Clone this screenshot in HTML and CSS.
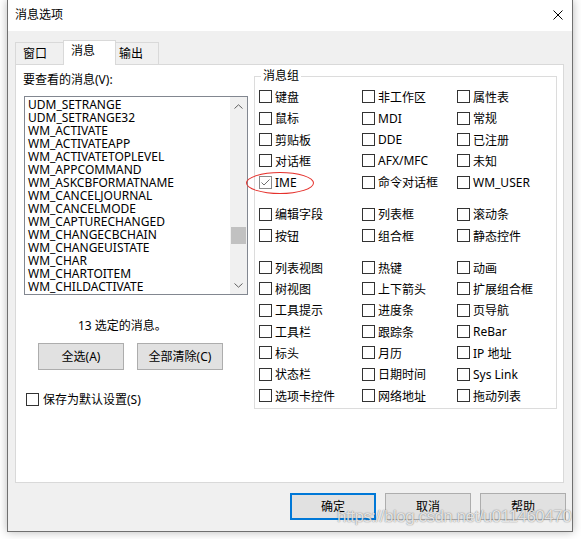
FILE: index.html
```html
<!DOCTYPE html>
<html lang="zh-CN">
<head>
<meta charset="utf-8">
<title>消息选项</title>
<link rel="stylesheet" href="styles.css">
</head>
<body>
<div class="window">
  <div class="titlebar">
    <span class="title">消息选项</span>
    <svg class="close" width="10" height="10" viewBox="0 0 10 10"><path d="M0.5 0.5 L9.5 9.5 M9.5 0.5 L0.5 9.5" stroke="#000" stroke-width="1" fill="none"/></svg>
  </div>
  <div class="client">
    <div class="tabs">
      <div class="tab tab-window">窗口</div>
      <div class="tab tab-active">消息</div>
      <div class="tab tab-output">输出</div>
    </div>
    <div class="panel">
      <div class="left">
        <div class="msg-label">要查看的消息(V):</div>
        <div class="listbox">
          <ul class="items">
            <li>UDM_SETRANGE</li>
            <li>UDM_SETRANGE32</li>
            <li>WM_ACTIVATE</li>
            <li>WM_ACTIVATEAPP</li>
            <li>WM_ACTIVATETOPLEVEL</li>
            <li>WM_APPCOMMAND</li>
            <li>WM_ASKCBFORMATNAME</li>
            <li>WM_CANCELJOURNAL</li>
            <li>WM_CANCELMODE</li>
            <li>WM_CAPTURECHANGED</li>
            <li>WM_CHANGECBCHAIN</li>
            <li>WM_CHANGEUISTATE</li>
            <li>WM_CHAR</li>
            <li>WM_CHARTOITEM</li>
            <li>WM_CHILDACTIVATE</li>
          </ul>
          <div class="vscroll">
            <div class="sb-btn sb-up"><svg width="9" height="5" viewBox="0 0 9 5"><path d="M0.5 4.5 L4.5 0.8 L8.5 4.5" stroke="#606060" stroke-width="1" fill="none"/></svg></div>
            <div class="sb-track"><div class="sb-thumb"></div></div>
            <div class="sb-btn sb-down"><svg width="9" height="5" viewBox="0 0 9 5"><path d="M0.5 0.5 L4.5 4.2 L8.5 0.5" stroke="#606060" stroke-width="1" fill="none"/></svg></div>
          </div>
        </div>
        <div class="count">13 选定的消息。</div>
        <div class="btnrow">
          <button class="btn">全选(A)</button>
          <button class="btn">全部清除(C)</button>
        </div>
        <div class="cb save"><span class="box"></span>保存为默认设置(S)</div>
      </div>
      <div class="group">
        <span class="legend">消息组</span>
        <div class="cb-group">
          <div class="cb"><span class="box"></span>键盘</div>
          <div class="cb"><span class="box"></span>非工作区</div>
          <div class="cb"><span class="box"></span>属性表</div>
          <div class="cb"><span class="box"></span>鼠标</div>
          <div class="cb"><span class="box"></span>MDI</div>
          <div class="cb"><span class="box"></span>常规</div>
          <div class="cb"><span class="box"></span>剪贴板</div>
          <div class="cb"><span class="box"></span>DDE</div>
          <div class="cb"><span class="box"></span>已注册</div>
          <div class="cb"><span class="box"></span>对话框</div>
          <div class="cb"><span class="box"></span>AFX/MFC</div>
          <div class="cb"><span class="box"></span>未知</div>
          <div class="cb checked ime"><span class="box"><svg width="11" height="11" viewBox="0 0 11 11"><path d="M1.5 5.5 L4 8 L9.5 2.5" stroke="#6f6f6f" stroke-width="1" fill="none"/></svg></span>IME<span class="ring"></span></div>
          <div class="cb"><span class="box"></span>命令对话框</div>
          <div class="cb"><span class="box"></span>WM_USER</div>
        </div>
        <div class="cb-group">
          <div class="cb"><span class="box"></span>编辑字段</div>
          <div class="cb"><span class="box"></span>列表框</div>
          <div class="cb"><span class="box"></span>滚动条</div>
          <div class="cb"><span class="box"></span>按钮</div>
          <div class="cb"><span class="box"></span>组合框</div>
          <div class="cb"><span class="box"></span>静态控件</div>
        </div>
        <div class="cb-group">
          <div class="cb"><span class="box"></span>列表视图</div>
          <div class="cb"><span class="box"></span>热键</div>
          <div class="cb"><span class="box"></span>动画</div>
          <div class="cb"><span class="box"></span>树视图</div>
          <div class="cb"><span class="box"></span>上下箭头</div>
          <div class="cb"><span class="box"></span>扩展组合框</div>
          <div class="cb"><span class="box"></span>工具提示</div>
          <div class="cb"><span class="box"></span>进度条</div>
          <div class="cb"><span class="box"></span>页导航</div>
          <div class="cb"><span class="box"></span>工具栏</div>
          <div class="cb"><span class="box"></span>跟踪条</div>
          <div class="cb"><span class="box"></span>ReBar</div>
          <div class="cb"><span class="box"></span>标头</div>
          <div class="cb"><span class="box"></span>月历</div>
          <div class="cb"><span class="box"></span>IP 地址</div>
          <div class="cb"><span class="box"></span>状态栏</div>
          <div class="cb"><span class="box"></span>日期时间</div>
          <div class="cb"><span class="box"></span>Sys Link</div>
          <div class="cb"><span class="box"></span>选项卡控件</div>
          <div class="cb"><span class="box"></span>网络地址</div>
          <div class="cb"><span class="box"></span>拖动列表</div>
        </div>
      </div>
    </div>
    <div class="footer">
      <button class="btn btn-default">确定</button>
      <button class="btn">取消</button>
      <button class="btn">帮助</button>
    </div>
  </div>
  <div class="watermark">https://blog.csdn.net/u011460470</div>
</div>
</body>
</html>
```
FILE: styles.css
```css
* { box-sizing: border-box; }
html, body { margin: 0; padding: 0; }
body {
  width: 581px;
  height: 539px;
  overflow: hidden;
  background: #ffffff;
  font-family: "Noto Sans", "Noto Sans CJK SC", sans-serif;
  font-size: 12px;
  color: #000;
}
.window {
  position: relative;
  margin-left: 7px;
  width: 566px;
  height: 532px;
  border: 1px solid #707070;
  border-top: none;
  background: #f0f0f0;
  box-shadow: 0 0 9px rgba(0, 0, 0, 0.28);
  display: flex;
  flex-direction: column;
}
.titlebar {
  height: 31px;
  background: #fff;
  display: flex;
  align-items: center;
  justify-content: space-between;
  padding: 0 9px 0 7px;
  flex: none;
}
.title { line-height: 14px; margin-top: -1px; }
.close { display: block; margin-top: -1px; }
.client { flex: 1; padding: 9px 8px 0 7px; }
.tabs {
  display: flex;
  align-items: flex-end;
  height: 24px;
  position: relative;
  z-index: 1;
}
.tab {
  border: 1px solid #d9d9d9;
  border-bottom: none;
  background: #f0f0f0;
  height: 22px;
  line-height: 21px;
  white-space: nowrap;
}
.tab-window { width: 48px; padding-left: 7px; border-right: none; }
.tab-active {
  width: 53px;
  height: 25px;
  margin-bottom: -1px;
  background: #fff;
  padding-left: 7px;
  line-height: 20px;
}
.tab-output { width: 43px; padding-left: 3px; border-left: none; }
.panel {
  height: 419px;
  border: 1px solid #d9d9d9;
  background: #fff;
  display: flex;
  align-items: flex-start;
}
.left { width: 238px; padding: 8px 0 0 8px; flex: none; }
.msg-label { line-height: 14px; margin-left: -1px; }
.listbox {
  margin-top: 9px;
  width: 224px;
  height: 199px;
  border: 1px solid #828790;
  display: flex;
  background: #fff;
}
.items {
  flex: 1;
  list-style: none;
  margin: 0;
  padding: 1px 0 0 3px;
  overflow: hidden;
  line-height: 13px;
  white-space: nowrap;
}
.vscroll {
  width: 17px;
  flex: none;
  background: #f0f0f0;
  display: flex;
  flex-direction: column;
}
.sb-btn { height: 17px; display: flex; align-items: center; justify-content: center; flex: none; }
.sb-up svg { margin-top: 2px; }
.sb-track { flex: 1; }
.sb-thumb { margin: 113px 0 0 1px; width: 15px; height: 17px; background: #c1c1c1; }
.count { margin: 24px 0 0 54px; line-height: 14px; }
.btnrow { display: flex; gap: 13px; margin: 10px 0 0 14px; }
.btn {
  width: 86px;
  height: 27px;
  padding: 0;
  border: 1px solid #adadad;
  background: #e1e1e1;
  font: inherit;
  color: #000;
  line-height: 14px;
}
.btn-default { border: 2px solid #0078d7; }
.cb { display: flex; align-items: center; white-space: nowrap; }
.box {
  width: 13px;
  height: 13px;
  border: 1px solid #333;
  background: #fff;
  margin-right: 3px;
  flex: none;
  display: flex;
  align-items: center;
  justify-content: center;
}
.save { margin: 22px 0 0 2px; height: 14px; }
.save .box { margin-right: 4px; }
.group {
  position: relative;
  margin-top: 11px;
  width: 303px;
  height: 333px;
  border: 1px solid #dcdcdc;
  padding: 9.33px 0 0 4px;
}
.legend {
  position: absolute;
  top: -8px;
  left: 6px;
  padding: 0 2px;
  background: #fff;
  line-height: 14px;
}
.cb-group {
  display: grid;
  grid-template-columns: 103px 95px 1fr;
  grid-auto-rows: 21.333px;
}
.cb-group + .cb-group { margin-top: 10.67px; }
.checked .box { border-color: #8a8a8a; }
.ime { position: relative; }
.ring {
  position: absolute;
  left: -13px;
  top: 0;
  width: 68px;
  height: 22px;
  border: 1.5px solid #e5322d;
  border-radius: 50%;
}
.footer {
  display: flex;
  justify-content: flex-end;
  gap: 9px;
  margin: 10px -2px 0 0;
}
.watermark {
  position: absolute;
  left: 329px;
  top: 507px;
  font-family: "Liberation Sans", Arial, sans-serif;
  font-size: 17px;
  letter-spacing: -0.5px;
  line-height: 20px;
  color: rgba(255, 255, 255, 0.8);
  text-shadow: 0 0 1px rgba(0, 0, 0, 0.45), 0 0 2px rgba(0, 0, 0, 0.2);
  white-space: nowrap;
}
```
